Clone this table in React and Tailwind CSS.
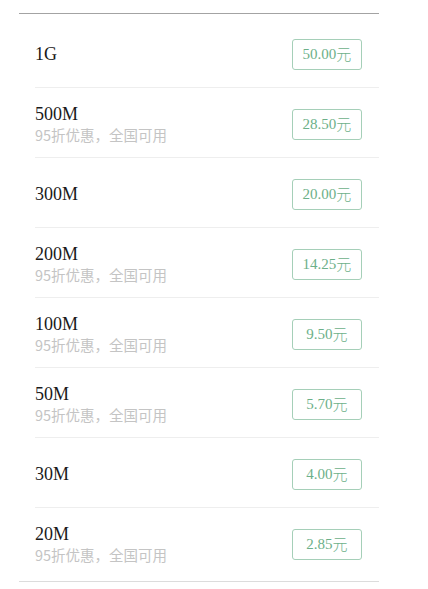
import React from "react";

const items = [
  { title: "1G", sub: false, price: "50.00" },
  { title: "500M", sub: true, price: "28.50" },
  { title: "300M", sub: false, price: "20.00" },
  { title: "200M", sub: true, price: "14.25" },
  { title: "100M", sub: true, price: "9.50" },
  { title: "50M", sub: true, price: "5.70" },
  { title: "30M", sub: false, price: "4.00" },
  { title: "20M", sub: true, price: "2.85" },
];

export default function App() {
  return (
    <div className="w-[428px] h-[589px] bg-white pt-[13px]">
      <div className="ml-[19px] w-[360px]">
        <div className="h-px bg-[#a3a3a3]" />
        <div className="pt-[5px]">
          {items.map((it, i) => (
            <div key={i} className="relative h-[70px] flex items-center pl-[16px] pr-[17px]">
              <div className="flex-1 flex flex-col">
                <div
                  className="text-[18px] leading-[20px] text-[#1a1a1a]"
                  style={{ fontFamily: '"Liberation Serif", "Noto Sans CJK SC", serif' }}
                >
                  {it.title}
                </div>
                {it.sub && (
                  <div
                    className="text-[14.5px] leading-[19px] text-[#c4c4c4] mt-[1px]"
                    style={{ fontFamily: '"Noto Sans CJK SC", sans-serif' }}
                  >
                    95折优惠，全国可用
                  </div>
                )}
              </div>
              <div
                className="w-[70px] h-[31px] border border-[#a5cfb8] rounded-[3px] flex items-center justify-center text-[15px] text-[#6cb089]"
                style={{ fontFamily: '"Liberation Serif", "Noto Sans CJK SC", serif' }}
              >
                {it.price}
                <span style={{ fontFamily: '"Noto Sans CJK SC", sans-serif' }} className="text-[15px] font-light">元</span>
              </div>
              {i < items.length - 1 && (
                <div className="absolute left-[16px] right-0 bottom-[1px] h-px bg-[#eeeeee]" />
              )}
            </div>
          ))}
        </div>
        <div className="mt-[2px] h-px bg-[#dcdcdc]" />
      </div>
    </div>
  );
}
